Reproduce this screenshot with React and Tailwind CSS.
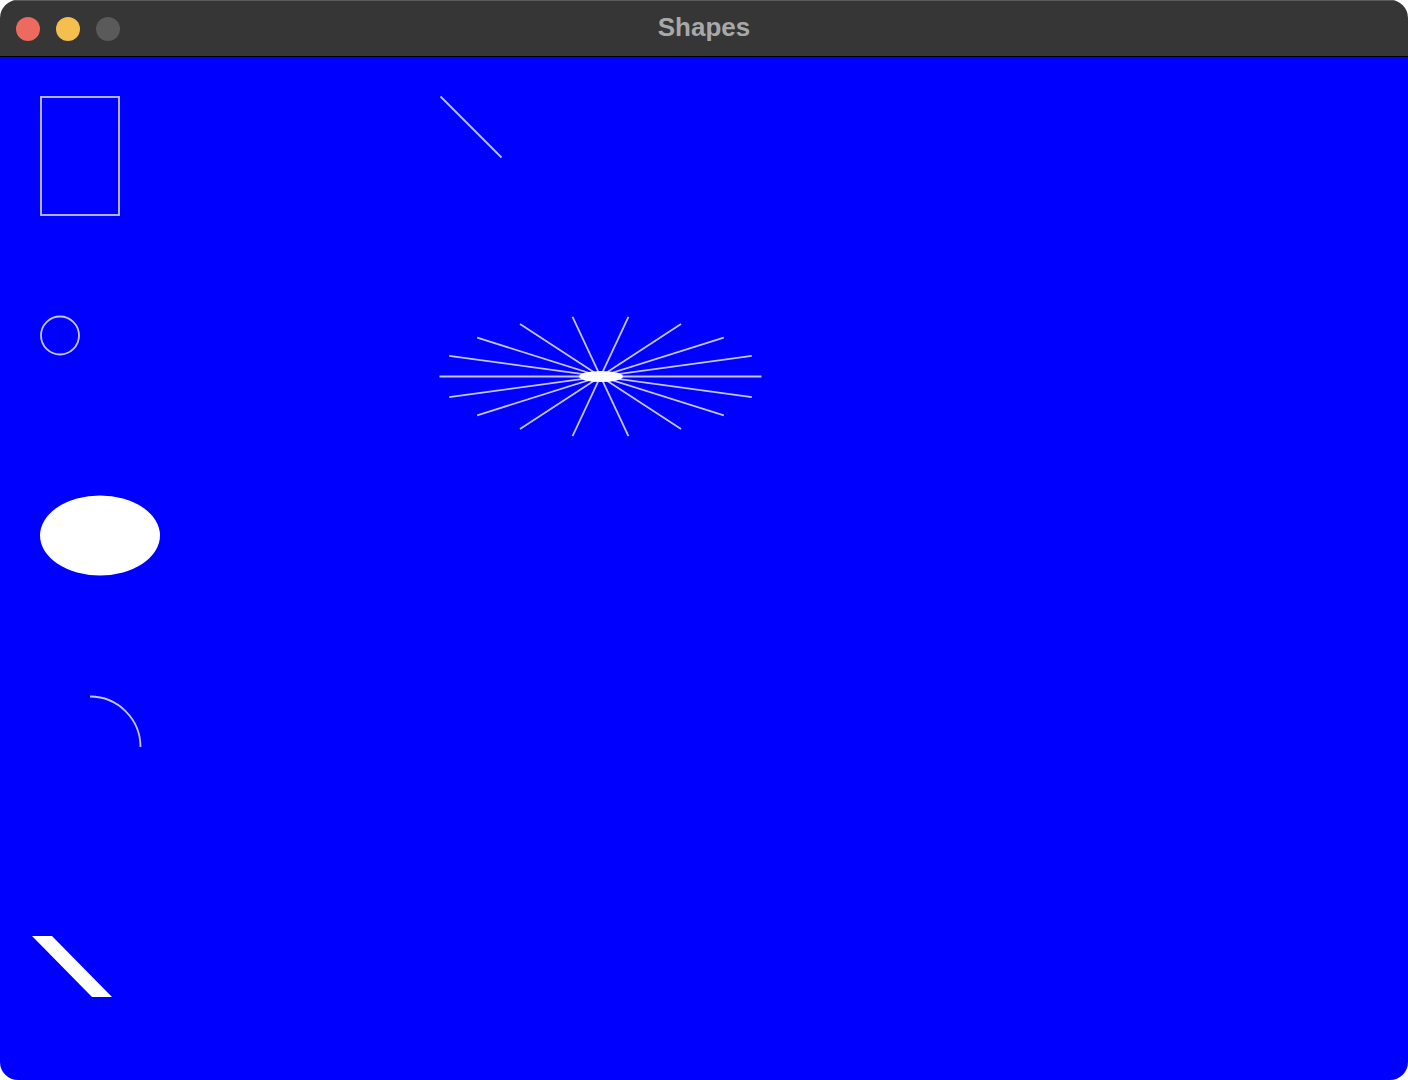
import React from "react";

const rays = [0, 20, 40, 60, 80, 100, 120, 140, 160].map((deg) => {
  const r = (deg * Math.PI) / 180;
  const dx = 161 * Math.cos(r);
  const dy = 60.5 * Math.sin(r);
  return { x1: 600.5 + dx, y1: 376.5 - dy, x2: 600.5 - dx, y2: 376.5 + dy };
});

export default function App() {
  return (
    <div className="w-[1408px] h-[1080px] bg-white">
      <div className="w-full h-full rounded-[18px] overflow-hidden flex flex-col">
        <div className="relative h-[57px] shrink-0 bg-[#363636] border-t border-t-[#5c5c5c] border-b border-b-black flex items-center">
          <div className="flex items-center gap-[16px] pl-[16px]">
            <div className="w-[24px] h-[24px] rounded-full bg-[#ec6a5e]" />
            <div className="w-[24px] h-[24px] rounded-full bg-[#f4bf4f]" />
            <div className="w-[24px] h-[24px] rounded-full bg-[#5a5a5a]" />
          </div>
          <div className="absolute inset-0 flex items-center justify-center pointer-events-none">
            <span className="text-[26px] font-bold text-[#a8a8a8] leading-none pb-[3px]" style={{ fontFamily: '"Liberation Sans", Arial, sans-serif' }}>
              Shapes
            </span>
          </div>
        </div>
        <div className="flex-1 bg-[#0000ff]">
          <svg width="1408" height="1023" viewBox="0 57 1408 1023" className="block">
            <g stroke="#c4c4ff" strokeWidth="1.8" fill="none">
              <rect x="41" y="97" width="78" height="118" />
              <line x1="440.5" y1="96.5" x2="501.5" y2="157.5" />
              <circle cx="60" cy="335.5" r="19" />
              {rays.map((l, i) => (
                <line key={i} x1={l.x1} y1={l.y1} x2={l.x2} y2={l.y2} />
              ))}
              <path d="M90 696.5 A50.5 50.5 0 0 1 140.5 747" />
            </g>
            <ellipse cx="601" cy="376.5" rx="22" ry="5.5" fill="#ffffff" />
            <ellipse cx="100" cy="535.5" rx="60" ry="40" fill="#ffffff" />
            <polygon points="32,936 52,936 112,997 92,997" fill="#ffffff" />
          </svg>
        </div>
      </div>
    </div>
  );
}
